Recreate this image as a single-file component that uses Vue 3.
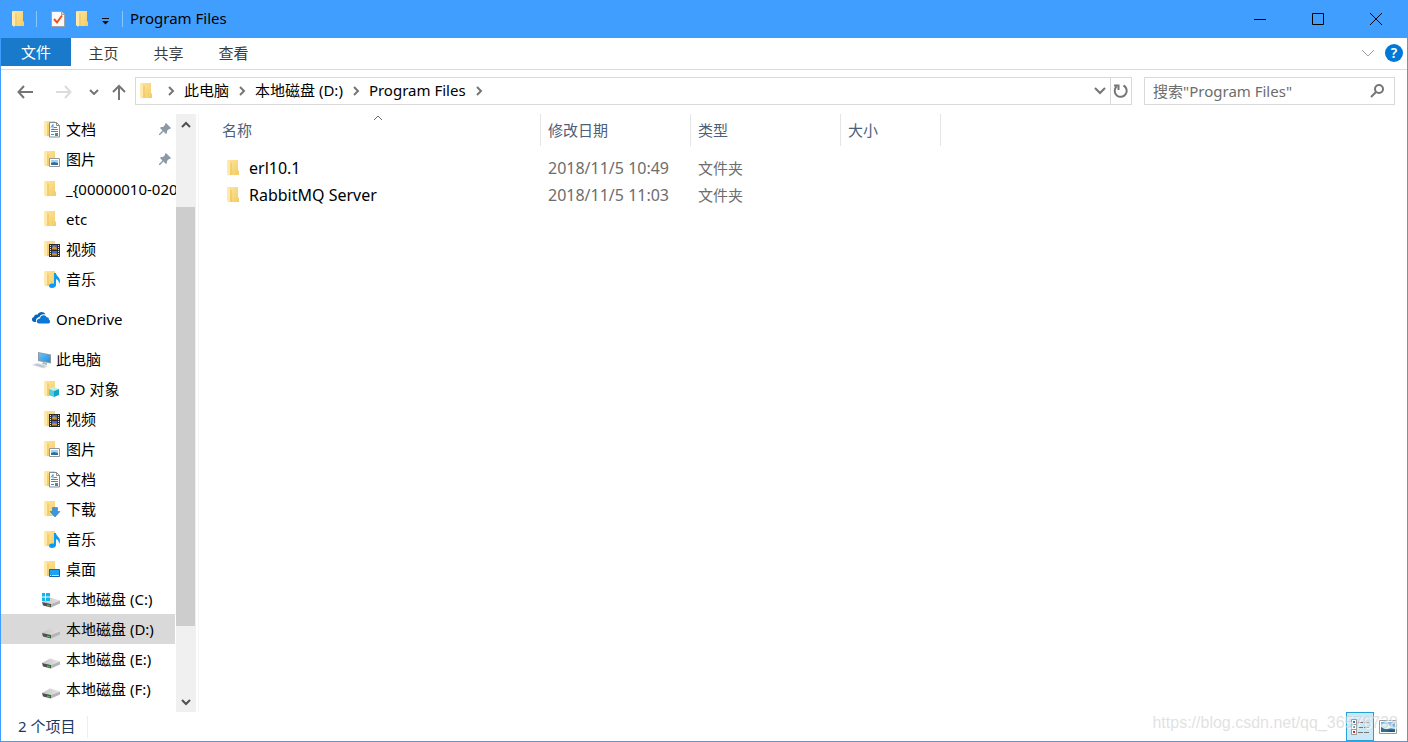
<script setup>
import { computed, ref } from "vue";

const tabs = ["主页", "共享", "查看"];
const crumbs = ["此电脑", "本地磁盘 (D:)", "Program Files"];

const groups = [
  [
    { name: "文档", icon: "documents", pinned: true },
    { name: "图片", icon: "pictures", pinned: true },
    { name: "_{00000010-020", icon: "folder" },
    { name: "etc", icon: "folder" },
    { name: "视频", icon: "videos" },
    { name: "音乐", icon: "music" },
  ],
  [{ name: "OneDrive", icon: "onedrive", root: true }],
  [
    { name: "此电脑", icon: "computer", root: true },
    { name: "3D 对象", icon: "objects" },
    { name: "视频", icon: "videos" },
    { name: "图片", icon: "pictures" },
    { name: "文档", icon: "documents" },
    { name: "下载", icon: "downloads" },
    { name: "音乐", icon: "music" },
    { name: "桌面", icon: "desktop" },
    { name: "本地磁盘 (C:)", icon: "system-drive" },
    { name: "本地磁盘 (D:)", icon: "drive" },
    { name: "本地磁盘 (E:)", icon: "drive" },
    { name: "本地磁盘 (F:)", icon: "drive" },
  ],
];

const files = ref([
  { name: "erl10.1", modified: "2018/11/5 10:49", type: "文件夹", size: "" },
  { name: "RabbitMQ Server", modified: "2018/11/5 11:03", type: "文件夹", size: "" },
]);

const selected = ref("本地磁盘 (D:)");
const view = ref("details");
const search = ref("");

const visibleFiles = computed(() =>
  files.value.filter((file) => file.name.toLowerCase().includes(search.value.toLowerCase())),
);
</script>

<template>
  <div class="window">
    <svg class="sprite" width="0" height="0" aria-hidden="true">
      <defs>
        <linearGradient id="gold" x1="0" y1="0" x2="1" y2="1">
          <stop offset="0" stop-color="#ffe49a" />
          <stop offset="1" stop-color="#f2cc66" />
        </linearGradient>
        <linearGradient id="screen" x1="0" y1="0" x2="1" y2="1">
          <stop offset="0" stop-color="#6cc4f8" />
          <stop offset="1" stop-color="#1c8fe0" />
        </linearGradient>
        <linearGradient id="metal" x1="0" y1="0" x2="1" y2="0">
          <stop offset="0" stop-color="#c4c4c4" />
          <stop offset="1" stop-color="#e4e4e6" />
        </linearGradient>
      </defs>
      <symbol id="icon-folder" viewBox="0 0 20 20">
        <path d="M3 2h10v10l1 1v4H4z" fill="url(#gold)" />
        <path d="M5 4v13h2V5z" fill="#e9bd52" opacity=".4" />
        <path d="M2 2l3 2v12l-1 2-2-2z" fill="#ffe9ad" />
      </symbol>
      <symbol id="icon-documents" viewBox="0 0 20 20">
        <use href="#icon-folder" />
        <path d="M7.500 3.500h7l3 3v11.500h-10z" fill="#fff" stroke="#8b8b8b" />
        <path d="M14.500 3.500v3h3" fill="none" stroke="#8b8b8b" />
        <path d="M9 10.500h7M9 12.500h7M12 8.500h3M9 15.500h3" stroke="#2994d1" />
        <path d="M9 8.500l2-3v4" fill="none" stroke="#2994d1" />
        <path d="M13 14h3v3h-3z" fill="#4e86a5" />
      </symbol>
      <symbol id="icon-pictures" viewBox="0 0 20 20">
        <use href="#icon-folder" />
        <path d="M7.500 9.500h10v8h-10z" fill="#fff" stroke="#969696" />
        <path d="M9 11h7v5H9z" fill="#9fd4f3" />
        <path d="M9 14l3-1 4 1v2H9z" fill="#2f6f9a" />
      </symbol>
      <symbol id="icon-videos" viewBox="0 0 20 20">
        <use href="#icon-folder" />
        <path d="M7 5h11v13H7z" fill="#2d2d2d" />
        <path d="M10 6h5v5h-5zM10 12h5v5h-5z" fill="#4569c7" />
        <path d="M10 9l2-2 3 2v1h-5zM10 15l2-1 3 1v1h-5z" fill="#c99639" />
        <path d="M8.500 6v12M16.500 6v12" stroke="#e8e8e8" stroke-dasharray="1 1" />
      </symbol>
      <symbol id="icon-music" viewBox="0 0 20 20">
        <use href="#icon-folder" />
        <path d="M12 4h2c0 3 4 4 4 8 0 1-.4 2-1 3 0-3-1-4-3-5v6c0 2-2 3-4 3s-3-1-3-2.300c0-1.700 2.500-2.700 5-2z" fill="#0b9bf0" />
      </symbol>
      <symbol id="icon-objects" viewBox="0 0 20 20">
        <use href="#icon-folder" />
        <path d="M7 10l5-2 5 2-5 2z" fill="#b9f0f8" />
        <path d="M7 10l5 2v6l-5-2z" fill="#55cbe2" />
        <path d="M12 12l5-2v6l-5 2z" fill="#14a5c6" />
      </symbol>
      <symbol id="icon-downloads" viewBox="0 0 20 20">
        <use href="#icon-folder" />
        <path d="M10.500 8.500h5v4h2.500l-5 5.500-5-5.500h2.500z" fill="#3a96dd" stroke="#2c7fc4" stroke-width=".6" />
      </symbol>
      <symbol id="icon-desktop" viewBox="0 0 20 20">
        <use href="#icon-folder" />
        <path d="M7.500 10.500h10v7h-10z" fill="#1ba1fa" stroke="#0b67a8" />
        <path d="M8 16.500h1M10 16.500h7" stroke="#bfe4fb" />
      </symbol>
      <symbol id="icon-onedrive" viewBox="0 0 20 20">
        <path d="M4 13H2C-1 12-.5 8.500 2 8c0-2 2-3 3.500-2.300C7 2.500 11.500 2 13.500 5.500 10 4.500 8 6 7.500 8 5 8.300 3.500 10.500 4 13z" fill="#0a64b8" />
        <path d="M7 14.500c-3 0-3.300-4.500 1-5 .3-4 5.500-4.500 6.700-1.200 1.800 0 2.500 1.200 2.200 2.500 1.800.5 1.500 3.700-.4 3.700z" fill="#0978d7" />
      </symbol>
      <symbol id="icon-computer" viewBox="0 0 20 20">
        <path d="M6 3l13 2.500v9L6 12z" fill="#8d9aa4" />
        <path d="M7 4.200l11 2.100v7L7 11z" fill="url(#screen)" />
        <path d="M11 13l4 1v2l-5-1z" fill="#aeb6bc" />
        <path d="M0 16l5-2 11 3-4 2.500z" fill="#d5dade" />
        <path d="M2 16l4-1 7 2-3 1.200z" fill="#b6bfc6" opacity=".7" />
      </symbol>
      <symbol id="icon-drive" viewBox="0 0 20 20">
        <path d="M0 14l8-4.500 10 3-9 3.500z" fill="url(#metal)" />
        <path d="M0 14l9 2v3.500l-8-2z" fill="#505050" />
        <path d="M9 16l9-3.500v3l-9 4z" fill="#b5b5b8" />
        <path d="M5 16.500l3 .7v1.300l-3-.7z" fill="#2fce3b" />
      </symbol>
      <symbol id="icon-system-drive" viewBox="0 0 20 20">
        <use href="#icon-drive" y="-1" />
        <path d="M0 4h3v3.500H0zM4 4h4v3.500H4zM0 8.500h3V12H0zM4 8.500h4V12H4z" fill="#10b5f0" />
      </symbol>
    </svg>

    <header class="titlebar">
      <svg class="icon"><use href="#icon-folder" /></svg>
      <span class="divider"></span>
      <button class="quick" aria-label="属性">
        <svg class="icon" viewBox="0 0 20 20">
          <path d="M2.500 2.500h10l3 3v12h-13z" fill="#fafafa" stroke="#a3a3a3" />
          <path d="M12.500 2.500v3h3" fill="#ddd" stroke="#a3a3a3" />
          <path d="M5 10l3 3.500 5-7" fill="none" stroke="#e8541e" stroke-width="2" />
        </svg>
      </button>
      <button class="quick" aria-label="新建文件夹">
        <svg class="icon"><use href="#icon-folder" /></svg>
      </button>
      <button class="quick" aria-label="自定义快速访问工具栏">
        <svg class="caret" viewBox="0 0 12 20">
          <path d="M3 9.500h7" stroke="#111" />
          <path d="M3 12h7l-3.500 3.500z" fill="#111" />
        </svg>
      </button>
      <span class="divider"></span>
      <h1>Program Files</h1>
      <div class="window-buttons">
        <button aria-label="最小化">
          <svg viewBox="0 0 12 12"><path d="M0 6.500h12" /></svg>
        </button>
        <button aria-label="最大化">
          <svg viewBox="0 0 12 12"><path d="M.5 .5h11v11H.5z" /></svg>
        </button>
        <button aria-label="关闭">
          <svg viewBox="0 0 12 12"><path d="M0 0l12 12M12 0L0 12" /></svg>
        </button>
      </div>
    </header>

    <nav class="ribbon">
      <button class="file-tab">文件</button>
      <button v-for="tab in tabs" :key="tab" class="tab">{{ tab }}</button>
      <button class="expand" aria-label="展开功能区">
        <svg width="14" height="8" viewBox="0 0 14 8"><path d="M1 1l6 6 6-6" /></svg>
      </button>
      <button class="help" aria-label="帮助">?</button>
    </nav>

    <div class="toolbar">
      <div class="history">
        <button aria-label="后退">
          <svg width="16" height="14" viewBox="0 0 16 14"><path d="M7 1L1.500 7 7 13M1.500 7H16" /></svg>
        </button>
        <button class="disabled" aria-label="前进" disabled>
          <svg width="16" height="14" viewBox="0 0 16 14"><path d="M9 1l5.500 6L9 13M14.500 7H0" /></svg>
        </button>
        <button class="recent" aria-label="最近浏览的位置">
          <svg width="10" height="6" viewBox="0 0 10 6"><path d="M1 1l4 4 4-4" /></svg>
        </button>
        <button class="up" aria-label="向上">
          <svg width="16" height="16" viewBox="0 0 16 16"><path d="M2 8l6-6 6 6M8 2v14" /></svg>
        </button>
      </div>

      <div class="address">
        <svg class="icon"><use href="#icon-folder" /></svg>
        <template v-for="crumb in crumbs" :key="crumb">
          <svg class="chevron" viewBox="0 0 26 10"><path d="M11 1l4 4-4 4" /></svg>
          <a href="#">{{ crumb }}</a>
        </template>
        <svg class="chevron" viewBox="0 0 26 10"><path d="M11 1l4 4-4 4" /></svg>
        <button class="previous" aria-label="以前的位置">
          <svg width="12" height="8" viewBox="0 0 12 8"><path d="M1 1l5 5 5-5" /></svg>
        </button>
        <button class="refresh" aria-label="刷新">
          <svg width="16" height="16" viewBox="0 0 16 16">
            <path d="M10.500 2.500A6 6 0 1 1 3.500 3.500M1 2.500h4.500V7" />
          </svg>
        </button>
      </div>

      <label class="search">
        <input v-model="search" type="text" placeholder="搜索&quot;Program Files&quot;" aria-label="搜索" />
        <svg width="14" height="14" viewBox="0 0 14 14">
          <circle cx="9" cy="5" r="4" />
          <path d="M6 8l-5 5" />
        </svg>
      </label>
    </div>

    <div class="body">
      <aside class="sidebar">
        <ul v-for="(group, index) in groups" :key="index">
          <li v-for="item in group" :key="item.name">
            <button
              class="place"
              :class="{ 'place--root': item.root, 'place--selected': item.name === selected }"
              @click="selected = item.name"
            >
              <svg class="icon"><use :href="`#icon-${item.icon}`" /></svg>
              <span class="place-name">{{ item.name }}</span>
              <svg v-if="item.pinned" class="pin" viewBox="0 0 12 12">
                <path d="M7 0l5 5-1 1h-1L8 8v2L7 11 4.500 8.500 1 12H0v-1l3.500-3.500L1 5l1-1h2l2-2V1z" fill="#8d99a5" />
              </svg>
            </button>
          </li>
        </ul>
      </aside>

      <div class="scrollbar">
        <button aria-label="向上滚动">
          <svg width="10" height="7" viewBox="0 0 10 7"><path d="M1 6l4-4 4 4" /></svg>
        </button>
        <div class="track"><div class="thumb"></div></div>
        <button aria-label="向下滚动">
          <svg width="10" height="7" viewBox="0 0 10 7"><path d="M1 1l4 4 4-4" /></svg>
        </button>
      </div>

      <main class="files">
        <table>
          <thead>
            <tr>
              <th class="col-name">
                名称
                <svg class="sort" viewBox="0 0 10 6"><path d="M1 5l4-4 4 4" /></svg>
              </th>
              <th class="col-date">修改日期</th>
              <th class="col-type">类型</th>
              <th class="col-size">大小</th>
            </tr>
          </thead>
          <tbody>
            <tr v-for="file in visibleFiles" :key="file.name">
              <td>
                <div class="file-name">
                  <svg class="icon"><use href="#icon-folder" /></svg>
                  {{ file.name }}
                </div>
              </td>
              <td class="modified">{{ file.modified }}</td>
              <td>{{ file.type }}</td>
              <td>{{ file.size }}</td>
            </tr>
          </tbody>
        </table>
      </main>
    </div>

    <footer class="status">
      <span class="count">{{ visibleFiles.length }} 个项目</span>
      <div class="views">
        <button
          :class="{ active: view === 'details' }"
          aria-label="详细信息"
          @click="view = 'details'"
        >
          <svg width="20" height="18" viewBox="0 0 20 18">
            <path d="M1.500 1.500h5v5h-5zM1.500 6.500h5v5h-5zM1.500 11.500h5v5h-5z" fill="#fff" stroke="#999" />
            <path d="M3 3h2v2H3z" fill="#3b76a8" />
            <path d="M3 8h2v2H3z" fill="#4aa0a0" />
            <path d="M3 13h2v2H3z" fill="#d22" />
            <path d="M8 4.500h5M14 4.500h5M8 9.500h5M14 9.500h5M8 14.500h5M14 14.500h5" stroke="#777" />
          </svg>
        </button>
        <button
          :class="{ active: view === 'icons' }"
          aria-label="大缩略图"
          @click="view = 'icons'"
        >
          <svg width="18" height="14" viewBox="0 0 18 14">
            <path d="M.5 .5h17v13H.5z" fill="#fff" stroke="#999" />
            <path d="M2 2h14v10H2z" fill="#73b5e8" />
            <path d="M2 5c3-3 7-1 9 1l5 1v2H2z" fill="#dff0fa" />
            <path d="M2 7l5 2 9-1v4H2z" fill="#2d7286" />
            <path d="M8 12l3-2 5 1v1z" fill="#2b4c93" />
          </svg>
        </button>
      </div>
      <span class="watermark">https://blog.csdn.net/qq_36576738</span>
    </footer>
  </div>
</template>

<style>
body {
  margin: 0;
}
</style>

<style scoped>
.window {
  display: flex;
  flex-direction: column;
  box-sizing: border-box;
  min-height: 100vh;
  border: 1px solid #409dff;
  background: #ffffff;
  color: #000000;
  font-family: "Noto Sans", "Noto Sans CJK SC", sans-serif;
  font-size: 15px;
  line-height: 20px;
}

.sprite {
  position: absolute;
}

button {
  display: flex;
  align-items: center;
  justify-content: center;
  padding: 0;
  border: 0;
  background: none;
  color: inherit;
  font: inherit;
}

svg {
  flex: none;
  fill: none;
}

.icon {
  width: 20px;
  height: 20px;
}

.titlebar {
  display: flex;
  align-items: center;
  box-sizing: border-box;
  height: 37px;
  padding: 0 2px 1px 9px;
  background: #409eff;
}

.divider {
  width: 1px;
  height: 16px;
  margin: 0 12px 0 6px;
  background: #8cc4ff;
}

.quick {
  margin-right: 5px;
}

.caret {
  width: 12px;
  height: 20px;
}

.titlebar h1 {
  flex: 1;
  margin: 0 0 0 -5px;
  padding-bottom: 2px;
  font-size: 15px;
  font-weight: 400;
}

.window-buttons {
  display: flex;
}

.window-buttons button {
  width: 58px;
  height: 36px;
}

.window-buttons svg {
  width: 12px;
  height: 12px;
  stroke: #000000;
}

.ribbon {
  display: flex;
  align-items: center;
  box-sizing: border-box;
  height: 32px;
  padding-bottom: 2px;
  border-bottom: 1px solid #dadbdc;
  color: #3b3b3b;
}

.file-tab {
  align-self: flex-start;
  width: 70px;
  height: 28px;
  background: #1979ca;
  color: #ffffff;
}

.tab {
  width: 65px;
}

.expand {
  margin-left: auto;
  stroke: #a0a0a0;
}

.help {
  width: 18px;
  height: 18px;
  margin: 0 4px 0 10px;
  border-radius: 50%;
  background: #0078d7;
  color: #ffffff;
  font-size: 14px;
  font-weight: 600;
}

.toolbar {
  display: flex;
  align-items: flex-start;
  gap: 12px;
  padding: 7px 12px 9px 0;
}

.history {
  display: flex;
  align-items: center;
  box-sizing: border-box;
  width: 122px;
  height: 28px;
  padding: 1px 0 0 16px;
  stroke: #757575;
  stroke-width: 2;
}

.history button {
  margin-right: 23px;
}

.history .disabled {
  margin-right: 17px;
  stroke: #dcdcdc;
}

.history .recent {
  margin-right: 12px;
}

.history .up {
  margin-right: 0;
}

.address {
  display: flex;
  flex: 1;
  align-items: center;
  box-sizing: border-box;
  height: 28px;
  padding-left: 2px;
  border: 1px solid #d9d9d9;
}

.address a {
  padding-bottom: 2px;
  color: #000000;
  text-decoration: none;
}

.chevron {
  width: 26px;
  height: 10px;
  stroke: #757575;
  stroke-width: 2;
}

.previous {
  width: 20px;
  height: 26px;
  margin-left: auto;
  stroke: #757575;
  stroke-width: 2;
}

.refresh {
  width: 21px;
  height: 26px;
  border-left: 1px solid #d9d9d9;
  stroke: #757575;
  stroke-width: 2;
}

.search {
  display: flex;
  align-items: center;
  box-sizing: border-box;
  width: 18%;
  height: 28px;
  padding: 0 10px 0 8px;
  border: 1px solid #d9d9d9;
  stroke: #757575;
  stroke-width: 2;
}

.search input {
  flex: 1;
  min-width: 0;
  padding: 0;
  border: 0;
  outline: 0;
  color: #000000;
  font: inherit;
}

.search input::placeholder {
  color: #6d6d6d;
}

.body {
  display: flex;
  flex: 1;
}

.sidebar {
  width: 174px;
  padding-bottom: 8px;
}

.sidebar ul {
  margin: 0;
  padding: 0;
  list-style: none;
}

.sidebar ul + ul {
  margin-top: 10px;
}

.place {
  justify-content: flex-start;
  gap: 4px;
  width: 100%;
  height: 30px;
  padding-left: 41px;
  text-align: left;
}

.place--root {
  padding-left: 31px;
}

.place--selected {
  background: #d9d9d9;
}

.place-name {
  flex: 1;
  min-width: 0;
  white-space: nowrap;
}

.pin {
  width: 12px;
  height: 12px;
  margin-right: 4px;
}

.scrollbar {
  display: flex;
  flex-direction: column;
  width: 20px;
  margin: 0 2px 0 1px;
  background: #f0f0f0;
}

.scrollbar button {
  height: 20px;
  stroke: #505050;
  stroke-width: 2;
}

.track {
  flex: 1;
}

.thumb {
  height: 75%;
  margin: 73px 1px 0 0;
  background: #cdcdcd;
}

.files {
  flex: 1;
  border-left: 1px solid #f5f5f5;
}

table {
  border-collapse: separate;
  border-spacing: 0;
  table-layout: fixed;
  width: 742px;
}

th {
  position: relative;
  height: 32px;
  padding: 0 0 0 7px;
  border-right: 1px solid #e5e5e5;
  color: #4c607a;
  font-weight: 400;
  text-align: left;
}

.col-name {
  width: 318px;
  padding-left: 23px;
}

.col-date,
.col-type {
  width: 142px;
}

.sort {
  position: absolute;
  top: 1px;
  left: 51%;
  width: 10px;
  height: 6px;
  stroke: #6d6d6d;
}

tbody::before {
  content: "";
  display: block;
  height: 8px;
}

td {
  height: 27px;
  padding: 0 0 0 7px;
  color: #6d6d6d;
}

td:first-child {
  padding-left: 26px;
  color: #000000;
}

.file-name {
  display: flex;
  align-items: center;
  gap: 4px;
  font-size: 16px;
}

.modified {
  font-size: 16px;
}

.status {
  position: relative;
  display: flex;
  align-items: center;
  justify-content: space-between;
  height: 29px;
  padding: 0 5px 0 17px;
  color: #1e395b;
}

.count {
  padding: 0 12px 2px 0;
  border-right: 1px solid #eeeeee;
}

.views {
  display: flex;
}

.views button {
  box-sizing: border-box;
  width: 28px;
  height: 29px;
}

.views .active {
  border: 1px solid #26a0da;
  background: #cbe8f6;
}

.watermark {
  position: absolute;
  top: 1px;
  right: 9px;
  color: rgba(205, 205, 205, 0.6);
  font-family: "Liberation Sans", Arial, sans-serif;
  font-size: 16px;
  text-shadow: 1px 1px 0 rgba(255, 255, 255, 0.7);
  pointer-events: none;
}
</style>
